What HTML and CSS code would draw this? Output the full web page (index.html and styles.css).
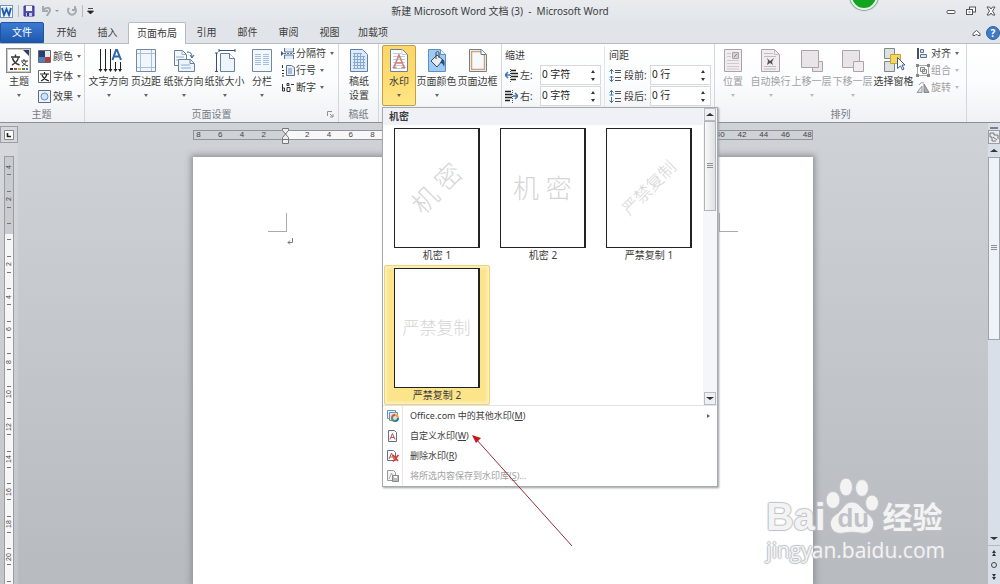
FILE: index.html
```html
<!DOCTYPE html>
<html lang="zh-CN">
<head>
    <meta charset="utf-8">
    <title>新建 Microsoft Word 文档 (3) - Microsoft Word</title>
    <link rel="stylesheet" href="styles.css">
</head>
<body>
    <header class="titlebar">
        <div class="quick">
            <svg width="14" height="16" viewBox="0 0 14 16"><rect x="0.5" y="2.5" width="12" height="12" fill="#fff" stroke="#6f94bf"/><rect x="2" y="4" width="9" height="9" fill="#dceaf8"/><path d="M2 5l2 7 2.5-6 2.5 6 2-7" fill="none" stroke="#1c5aa8" stroke-width="1.8"/></svg>
            <span class="bar"></span>
            <button class="tool" aria-label="保存"><svg width="12" height="12" viewBox="0 0 12 12"><path d="M1 1h10v10H1z" fill="#5450b4" stroke="#37348c"/><path d="M3 1h6v5H3z" fill="#f2f4fc"/><path d="M3 8h6v3H3z" fill="#c5c9ea"/><path d="M4 8h2v3H4z" fill="#37348c"/></svg></button>
            <button class="tool" aria-label="撤消"><svg width="19" height="12" viewBox="0 0 19 12"><path d="M2 1v5h5M2 6c2-4 7-4 7-1 0 3-3 4-3 6" fill="none" stroke="#a5a9b0" stroke-width="2"/><path d="M14 5h4l-2 2z" fill="#999"/></svg></button>
            <button class="tool" aria-label="恢复"><svg width="12" height="12" viewBox="0 0 12 12"><path d="M3 3a4 4 0 1 0 6 0M9 1v4H6" fill="none" stroke="#a5a9b0" stroke-width="2"/></svg></button>
            <span class="bar"></span>
            <button class="tool" aria-label="自定义"><svg width="7" height="8" viewBox="0 0 7 8"><path d="M1 1.5h5M0.5 4h6l-3 3z" fill="#222" stroke="#222" stroke-width="0.8"/></svg></button>
        </div>
        <div class="caption">新建 Microsoft Word 文档 (3)&nbsp; -&nbsp; Microsoft Word</div>
        <div class="winbuttons">
            <button class="tool" aria-label="最小化"><svg width="10" height="10" viewBox="0 0 10 10"><rect x="1" y="4.5" width="8" height="3" rx="1" fill="#fff" stroke="#555"/></svg></button>
            <button class="tool" aria-label="还原"><svg width="10" height="10" viewBox="0 0 10 10"><rect x="3.5" y="1" width="6" height="5" fill="#fff" stroke="#555"/><rect x="0.5" y="3.5" width="6" height="5" fill="#fff" stroke="#555"/><path d="M2.5 6h2" stroke="#555"/></svg></button>
            <button class="tool" aria-label="关闭"><svg width="10" height="10" viewBox="0 0 10 10"><path d="M1 1h2.5L5 3l1.5-2H9L6.5 5 9 9H6.5L5 7 3.5 9H1l2.5-4z" fill="#fff" stroke="#555"/></svg></button>
        </div>
        <span class="ball"></span>
    </header>

    <nav class="tabs">
        <button class="tab file">文件</button>
        <button class="tab">开始</button>
        <button class="tab">插入</button>
        <button class="tab active">页面布局</button>
        <button class="tab">引用</button>
        <button class="tab">邮件</button>
        <button class="tab">审阅</button>
        <button class="tab">视图</button>
        <button class="tab">加载项</button>
        <div class="help">
            <button class="tool" aria-label="折叠"><svg width="9" height="8" viewBox="0 0 9 8"><path d="M1 4.5l3.5-3 3.5 3v2H6L4.5 5 3 6.500H1z" fill="#fff" stroke="#555"/></svg></button>
            <button class="tool round" aria-label="帮助">?</button>
        </div>
    </nav>

    <div class="ribbon">
        <section class="group">
            <div class="tools">
                <button class="big">
                    <svg width="26" height="26" viewBox="0 0 26 26"><rect x="0.5" y="0.5" width="24" height="24" fill="#fff" stroke="#888"/><rect x="1.5" y="1.5" width="22" height="22" fill="none" stroke="#ccc"/><path d="M17 2h6v6z" fill="#27406f"/><path d="M5 9h9M9.5 6.5V9M6 17c4-2 6-5 6.5-8M6.5 10c1 4 4 6 7 7" stroke="#333" stroke-width="1.4" fill="none"/><path d="M15 13h7M18 11v2M16 18c2-1 4-3 4-5M16 14c1 2 3 3 6 4" stroke="#333" fill="none"/><path d="M4 21h3" stroke="#333" stroke-width="2"/><path d="M8 21h3" stroke="#b84b3c" stroke-width="2"/><path d="M12 21h3" stroke="#d9a23c" stroke-width="2"/><path d="M16 21h3" stroke="#57864a" stroke-width="2"/><path d="M20 21h2" stroke="#4a78b5" stroke-width="2"/></svg>
                    <span>主题</span><i class="caret"></i>
                </button>
                <div class="stack wide">
                    <button class="small"><svg width="14" height="13" viewBox="0 0 14 13"><path d="M1 1h6v6H1z" fill="#243f70"/><path d="M7 1h6v6H7z" fill="#e3e8ef"/><path d="M1 7h6v5H1z" fill="#4c82bc"/><path d="M7 7h6v5H7z" fill="#b83b37"/><path d="M.5.5h12v12H.5z" fill="none" stroke="#667"/></svg><span>颜色</span><i class="caret"></i></button>
                    <button class="small"><svg width="14" height="13" viewBox="0 0 14 13"><path d="M.5.5h12v12H.5z" fill="#fff" stroke="#667"/><path d="M2 4h9M6.5 2v2M3 11c4-2 5-4 6-7M4 5c1 3 4 5 7 6" stroke="#222" fill="none" stroke-width="1.2"/></svg><span>字体</span><i class="caret"></i></button>
                    <button class="small"><svg width="14" height="13" viewBox="0 0 14 13"><path d="M.5.5h12v12H.5z" fill="#eef3fa" stroke="#667"/><circle cx="6.5" cy="6.5" r="3.5" fill="#cfe2f8" stroke="#5b8ecb"/></svg><span>效果</span><i class="caret"></i></button>
                </div>
            </div>
            <div class="name">主题</div>
        </section>

        <section class="group setup">
            <div class="tools">
                <button class="big long">
                    <svg width="26" height="26" viewBox="0 0 26 26"><path d="M4.5 1v20M9.5 1v20M14.5 1v20M19.5 14v8M24.5 14v8" stroke="#222"/><path d="M2.5 21h4l-2 3zM7.5 21h4l-2 3zM12.5 21h4l-2 3zM17.5 21h4l-2 3zM22 21h4l-2 3z" fill="#222"/><path d="M16.5 12l3.5-10h1l4 10M18 8.5h5" fill="none" stroke="#2f67a8" stroke-width="2"/></svg>
                    <span>文字方向</span><i class="caret"></i>
                </button>
                <button class="big">
                    <svg width="22" height="26" viewBox="0 0 22 26"><path d="M1.5 1.5h19v22h-19z" fill="#f1f6fc" stroke="#7488a2"/><path d="M5.5 2v21M16.5 2v21M2 5.5h18M2 19.5h18" stroke="#a5c0dc"/></svg>
                    <span>页边距</span><i class="caret"></i>
                </button>
                <button class="big long">
                    <svg width="24" height="26" viewBox="0 0 24 26"><path d="M2.5 2.5h8l4 4v11h-12z" fill="#f5f9fe" stroke="#6b7f99"/><path d="M10 2.5v4h4M4 9h8M4 12h8" fill="none" stroke="#8daed0"/><path d="M6.5 11.5h12l4 4v8h-16z" fill="#edf3fb" stroke="#6b7f99"/><path d="M18 11.5v4h4" fill="none" stroke="#6b7f99"/><path d="M9 17h9M9 20h10" stroke="#8daed0"/><path d="M15 4c4 0 5 2 5 5M18 7l2 3 2-3" fill="none" stroke="#2f5f9c"/></svg>
                    <span>纸张方向</span><i class="caret"></i>
                </button>
                <button class="big long">
                    <svg width="24" height="26" viewBox="0 0 24 26"><path d="M7.5 5.5h9l5 5v13h-14z" fill="#edf4fc" stroke="#6b7f99"/><path d="M16.5 5.5v5h5" fill="#fff" stroke="#6b7f99"/><path d="M6 2.5h16M6 1v3M22 1v3M3.5 5v18M2 5h3M2 23.5h3" stroke="#34517a" fill="none"/></svg>
                    <span>纸张大小</span><i class="caret"></i>
                </button>
                <button class="big">
                    <svg width="22" height="26" viewBox="0 0 22 26"><path d="M1.5 1.5h19v22h-19z" fill="#f4f8fd" stroke="#7488a2"/><path d="M4 6.5h6M4 8.5h6M4 10.5h6M4 12.5h6M4 14.5h6M4 16.5h6M12 6.5h6M12 8.5h6M12 10.5h6M12 12.5h6M12 14.5h6M12 16.5h6" stroke="#a5bedb"/></svg>
                    <span>分栏</span><i class="caret"></i>
                </button>
                <div class="stack">
                    <button class="small"><svg width="14" height="13" viewBox="0 0 14 13"><path d="M3.5 1v4h9V1M3.5 12V8h9v4" fill="#dce8f6" stroke="#5c7390"/><path d="M3 6.5h11" stroke="#5c7390" stroke-dasharray="2 1"/><path d="M0 4l3 2.5L0 9z" fill="#2f5f9c"/></svg><span>分隔符</span><i class="caret"></i></button>
                    <button class="small"><svg width="14" height="13" viewBox="0 0 14 13"><path d="M5.5 1.5h5l3 2v8h-8z" fill="#e6eff9" stroke="#5c7390"/><path d="M7 5h4M7 7h4M7 9h4" stroke="#6c88aa"/><path d="M1.5 1v3M1 6.5h2M1 9.5h2M1 12h2" stroke="#333"/></svg><span>行号</span><i class="caret"></i></button>
                    <button class="small"><svg width="14" height="13" viewBox="0 0 14 13"><path d="M1.5 3v7h2V7h-2M6 2.5h2v2H6zM6 6.5h3v4H6zM10 3.5h3" fill="none" stroke="#333"/></svg><span>断字</span><i class="caret"></i></button>
                </div>
            </div>
            <div class="name">页面设置<svg class="launch" width="7" height="7" viewBox="0 0 7 7"><path d="M.5 5V.5H5M3 3l3 3M6 3v3H3" fill="none" stroke="#8a919c"/></svg></div>
        </section>

        <section class="group paper">
            <div class="tools">
                <button class="big">
                    <svg width="20" height="26" viewBox="0 0 20 26"><path d="M1.5 1.5h12l5 5v17h-17z" fill="#dbe9f8" stroke="#5f7fa8"/><path d="M4 5.5h9M4 8.5h12M4 11.5h12M4 14.5h12M4 17.5h12M4 20.5h12M5.5 5v16M8.5 5v16M11.5 5v16M14.5 8v13" stroke="#88a9cf"/></svg>
                    <span>稿纸</span><span>设置</span>
                </button>
            </div>
            <div class="name">稿纸</div>
        </section>

        <section class="group back">
            <div class="tools">
                <div class="drop">
                    <button class="big pressed">
                        <svg width="20" height="26" viewBox="0 0 20 26"><path d="M1.5 1.5h12l5 5v17h-17z" fill="#fff" stroke="#6b7f99"/><path d="M13 1.5v5h5M4 5.5h8M4 8.5h12M4 11.5h12M4 14.5h12M4 17.5h12M4 20.5h12" fill="none" stroke="#c5cbd4"/><path d="M5 19l5-12 5 12M7 15h6M3.5 19.5h4M12.5 19.5h4" fill="none" stroke="#cf8080" stroke-width="1.6"/></svg>
                        <span>水印</span><i class="caret"></i>
                    </button>
                    <div class="menu">
                        <div class="upper">
                            <div class="gallery">
                                <div class="heading">机密</div>
                                <div class="grid">
                                    <button class="cell"><span class="sheet"><b class="mark tilt">机 密</b></span><span>机密 1</span></button>
                                    <button class="cell"><span class="sheet"><b class="mark">机 密</b></span><span>机密 2</span></button>
                                    <button class="cell"><span class="sheet"><b class="mark fine tilt">严禁复制</b></span><span>严禁复制 1</span></button>
                                    <button class="cell chosen"><span class="sheet"><b class="mark fine">严禁复制</b></span><span>严禁复制 2</span></button>
                                </div>
                            </div>
                            <div class="scroll">
                                <button class="arrow" aria-label="向上"><i class="up"></i></button>
                                <div class="thumb"><i class="grip"></i></div>
                                <button class="arrow last" aria-label="向下"><i class="down"></i></button>
                            </div>
                        </div>
                        <button class="item">
                            <span class="icon"><svg width="14" height="14" viewBox="0 0 14 14"><path d="M1.5 1.5h8v8h-8z" fill="#eaf2fb" stroke="#6b8fbd"/><path d="M3.5 3.5h8v8h-8z" fill="#d5e5f6" stroke="#6b8fbd"/><path d="M6 9a3 3 0 0 1 3-3" stroke="#d45b35" fill="none" stroke-width="2"/><path d="M9 6a3 3 0 0 1 3 3" stroke="#e3ae31" fill="none" stroke-width="2"/><path d="M12 9a3 3 0 0 1-3 3" stroke="#2d6fb5" fill="none" stroke-width="2"/><path d="M9 12a3 3 0 0 1-3-3" stroke="#4c9a4c" fill="none" stroke-width="2"/></svg></span>
                            <span class="text">Office.com 中的其他水印(<u>M</u>)</span><i class="more"></i>
                        </button>
                        <button class="item">
                            <span class="icon"><svg width="14" height="14" viewBox="0 0 14 14"><path d="M2.5 1.5h6l2 2v9h-8z" fill="#fff" stroke="#63708c"/><path d="M4 10.5l2.5-6 2.5 6M5 8.5h3" fill="none" stroke="#c05050"/></svg></span>
                            <span class="text">自定义水印(<u>W</u>)</span>
                        </button>
                        <button class="item">
                            <span class="icon"><svg width="14" height="14" viewBox="0 0 14 14"><path d="M1.5 1.5h6l2 2v8h-8z" fill="#fff" stroke="#63708c"/><path d="M3 10l2.5-6L8 10M4 8h3" fill="none" stroke="#c05050"/><path d="M7 6l5 6M12.5 6L7 12.5" stroke="#d5402b" stroke-width="1.8"/></svg></span>
                            <span class="text">删除水印(<u>R</u>)</span>
                        </button>
                        <button class="item" disabled>
                            <span class="icon"><svg width="14" height="14" viewBox="0 0 14 14"><path d="M1.5 1.5h6l2 2v8h-8z" fill="#f5f5f5" stroke="#999"/><path d="M3 10l2.5-6L8 10" fill="none" stroke="#aaa"/><path d="M6.5 6.5h6v6h-6z" fill="#bbb" stroke="#888"/><path d="M8 7h3v2H8z" fill="#fff"/></svg></span>
                            <span class="text">将所选内容保存到水印库(<u>S</u>)...</span>
                        </button>
                    </div>
                </div>
                <button class="big long">
                    <svg width="20" height="26" viewBox="0 0 20 26"><path d="M1.5 1.5h12l5 5v17h-17z" fill="#9dcbf2" stroke="#5f8fc0"/><path d="M13.5 1.5v5h5" fill="#e5f2fd" stroke="#5f8fc0"/><path d="M4 13l6-6 6 5-6 7z" fill="#e9edf1" stroke="#404a56"/><path d="M9 11V5c0-2 3-2 3 0v5" fill="none" stroke="#404a56"/><path d="M15 11c3 1 3 4 2 8-1-4-3-4-4-4z" fill="#244f85"/></svg>
                    <span>页面颜色</span><i class="caret"></i>
                </button>
                <button class="big long">
                    <svg width="20" height="26" viewBox="0 0 20 26"><path d="M1.5 1.5h12l5 5v17h-17z" fill="#fff" stroke="#6b7f99"/><path d="M3.5 3.5h9l4 4v14h-13z" fill="#f5f8fc" stroke="#d3a171" stroke-width="1.5"/><path d="M13 1.5v5h5" fill="#fff" stroke="#6b7f99"/></svg>
                    <span>页面边框</span>
                </button>
            </div>
        </section>

        <section class="group para">
            <div class="fields">
                <div class="title">缩进</div>
                <div class="field">
                    <svg width="13" height="13" viewBox="0 0 13 13"><path d="M6 1.5h5M6 4.5h7M6 7.5h7M6 10.5h5" stroke="#222" stroke-width="1.5"/><path d="M0 6h5M3 3l-3 3 3 3" stroke="#3976b9" fill="none" stroke-width="1.5"/><path d="M5.5 0v13" stroke="#555" stroke-dasharray="1 1"/></svg>
                    <label for="left">左:</label>
                    <div class="spin"><input id="left" type="text" value="0 字符"><div class="steps"><button aria-label="增加"><i class="up"></i></button><button aria-label="减少"><i class="down"></i></button></div></div>
                </div>
                <div class="field">
                    <svg width="13" height="13" viewBox="0 0 13 13"><path d="M0 1.5h6M0 4.5h7M0 7.5h7M0 10.5h5" stroke="#222" stroke-width="1.5"/><path d="M13 6H8M10 3l3 3-3 3" stroke="#3976b9" fill="none" stroke-width="1.5"/><path d="M7.5 0v13" stroke="#555" stroke-dasharray="1 1"/></svg>
                    <label for="right">右:</label>
                    <div class="spin"><input id="right" type="text" value="0 字符"><div class="steps"><button aria-label="增加"><i class="up"></i></button><button aria-label="减少"><i class="down"></i></button></div></div>
                </div>
            </div>
            <div class="fields">
                <div class="title">间距</div>
                <div class="field">
                    <svg width="13" height="13" viewBox="0 0 13 13"><path d="M6 1.5h6M6 3.5h6M6 8.5h6M6 11.5h6" stroke="#555"/><path d="M2.5 0v5M2.5 7v6M0.5 2.500l2-2 2 2M0.5 10.5l2 2 2-2M0.5 8h4" stroke="#3976b9" fill="none"/></svg>
                    <label for="before">段前:</label>
                    <div class="spin"><input id="before" type="text" value="0 行"><div class="steps"><button aria-label="增加"><i class="up"></i></button><button aria-label="减少"><i class="down"></i></button></div></div>
                </div>
                <div class="field">
                    <svg width="13" height="13" viewBox="0 0 13 13"><path d="M6 1.5h6M6 3.5h6M6 8.5h6M6 11.5h6" stroke="#555"/><path d="M2.5 0v5M2.5 7v6M0.5 2.500l2-2 2 2M0.5 10.5l2 2 2-2M0.5 5h4" stroke="#3976b9" fill="none"/></svg>
                    <label for="after">段后:</label>
                    <div class="spin"><input id="after" type="text" value="0 行"><div class="steps"><button aria-label="增加"><i class="up"></i></button><button aria-label="减少"><i class="down"></i></button></div></div>
                </div>
            </div>
        </section>

        <section class="group arrange">
            <div class="tools">
                <button class="big" disabled>
                    <svg width="20" height="26" viewBox="0 0 20 26"><path d="M1.5 1.5h17v22h-17z" fill="#f0ecef" stroke="#aaa3a8"/><path d="M9.5 4.5h6v6h-6z" fill="#d5ced3" stroke="#aaa3a8"/><path d="M11 9l3-3" stroke="#888"/><path d="M4 5.5h4M4 8.5h4M4 12.5h12M4 15.5h12M4 18.5h12M4 21h12" stroke="#cfc8cd"/></svg>
                    <span>位置</span><i class="caret"></i>
                </button>
                <button class="big long" disabled>
                    <svg width="20" height="26" viewBox="0 0 20 26"><path d="M.5 1.5h13l5 5v17H.5z" fill="#f0ecef" stroke="#aaa3a8"/><path d="M13.5 1.5v5h5M3 5.5h9M3 8.5h12M3 18.5h12M3 21h12" fill="none" stroke="#c2bbc0"/><path d="M6 10l3 3 4-3-2 4 1 3-3-2-3 2 1-4z" fill="#555"/></svg>
                    <span>自动换行</span><i class="caret"></i>
                </button>
                <button class="big long" disabled>
                    <svg width="24" height="26" viewBox="0 0 24 26"><path d="M12.5 13.5h10v10h-10z" fill="#e9e4e8" stroke="#aaa3a8"/><path d="M1.5 2.5h17v17h-17z" fill="#e9e4e8" stroke="#aaa3a8"/></svg>
                    <span>上移一层</span><i class="caret"></i>
                </button>
                <button class="big long" disabled>
                    <svg width="24" height="26" viewBox="0 0 24 26"><path d="M1.5 2.5h17v17h-17z" fill="#e9e4e8" stroke="#aaa3a8"/><path d="M12.5 13.5h10v10h-10z" fill="#efebee" stroke="#aaa3a8"/></svg>
                    <span>下移一层</span><i class="caret"></i>
                </button>
                <button class="big long">
                    <svg width="22" height="26" viewBox="0 0 22 26"><path d="M1.5.5h10v10h-10zM1.5 13.5h10v10h-10z" fill="#dde2df" stroke="#7b8791"/><path d="M7.5 6.5h10v9h-10z" fill="#f5d660" stroke="#c9a22c"/><path d="M14.5 9.5v11l3-2.5 2 4 1.5-1-2-4h3z" fill="#fff" stroke="#3b5f92"/></svg>
                    <span>选择窗格</span>
                </button>
                <div class="stack">
                    <button class="small"><svg width="14" height="13" viewBox="0 0 14 13"><path d="M2 1v11" stroke="#222" stroke-width="1.6"/><path d="M4.5 2.5h3v3h-3zM4.5 7.5h6v3h-6z" fill="#d7e3f1" stroke="#5c7390"/></svg><span>对齐</span><i class="caret"></i></button>
                    <button class="small" disabled><svg width="14" height="13" viewBox="0 0 14 13"><path d="M1.5 1.5h11v10h-11z" fill="none" stroke="#aaa"/><path d="M0 0h3v3H0zM11 0h3v3h-3zM0 10h3v3H0zM11 10h3v3h-3z" fill="#888"/><path d="M4.5 3.5h4v4h-4zM6.5 5.5h4v4h-4z" fill="#eee" stroke="#888"/></svg><span>组合</span><i class="caret"></i></button>
                    <button class="small" disabled><svg width="14" height="13" viewBox="0 0 14 13"><path d="M1 11.5h5V5z" fill="#ddd" stroke="#999"/><path d="M8 11.5h5L8 3z" fill="#aaa" stroke="#888"/><path d="M3 4c1-2 3-3 5-2" fill="none" stroke="#999"/></svg><span>旋转</span><i class="caret"></i></button>
                </div>
            </div>
            <div class="name">排列</div>
        </section>
    </div>

    <main class="work">
        <div class="side">
            <button class="tabstop" aria-label="制表符"><svg width="10" height="10" viewBox="0 0 10 10"><path d="M.5.5h9v9h-9z" fill="#fff" stroke="#888"/><path d="M3.5 3v3.5H7" fill="none" stroke="#222" stroke-width="1.6"/></svg></button>
            <div class="vruler">
                <span>4</span><span>2</span><span></span><span>2</span><span>4</span><span>6</span><span>8</span><span>10</span><span>12</span><span>14</span><span>16</span><span>18</span><span>20</span><span></span>
            </div>
        </div>
        <div class="doc">
            <div class="hruler">
                <span>8</span><span>6</span><span>4</span><span>2</span><span class="indent"><svg width="9" height="17" viewBox="0 0 9 17"><path d="M1.5.5h6v2l-3 3.5 3 3.5v6h-6v-6l3-3.5-3-3.5zM1.5 11.5h6" fill="#eee" stroke="#777"/></svg></span><span class="stop">2</span><span class="stop">4</span><span class="stop">6</span><span class="stop">8</span><span class="stop">10</span><span class="stop">12</span><span class="stop">14</span><span class="stop">16</span><span class="stop">18</span><span class="stop">20</span><span class="stop">22</span><span class="stop">24</span><span class="stop">26</span><span class="stop">28</span><span class="stop">30</span><span class="stop">32</span><span class="stop">34</span><span class="stop">36</span><span class="stop">38</span><span>40</span><span>42</span><span>44</span><span>46</span><span>48</span>
            </div>
            <div class="page">
                <div class="corners"><span class="corner"></span><span class="corner flip"></span></div>
                <svg class="return" width="7" height="7" viewBox="0 0 7 7"><path d="M5.5 0v4.5H1M3 2.5l-2 2 2 2" fill="none" stroke="#777"/></svg>
            </div>
        </div>
        <div class="vscroll">
            <i class="split"></i>
            <button class="toggle" aria-label="标尺"><svg width="10" height="10" viewBox="0 0 10 10"><path d="M1 1h4v2h4v4M1 1v4h2v4h4M4 5l4 3" fill="none" stroke="#777"/></svg></button>
            <button class="end" aria-label="向上"><i class="up"></i></button>
            <div class="slider"><i class="grip"></i></div>
            <button class="end bottom" aria-label="向下"><i class="down"></i></button>
            <div class="browse">
                <button aria-label="前一页"><i class="up"></i><i class="up"></i></button>
                <button aria-label="浏览对象"><i class="dot"></i></button>
                <button aria-label="下一页"><i class="down"></i><i class="down"></i></button>
            </div>
        </div>
    </main>

    <svg class="pointer" width="102" height="112" viewBox="0 0 102 112"><path d="M4 4l96 107" stroke="#8f3038"/><path d="M0 0l9 3-5 5z" fill="#c8161d"/></svg>

    <div class="brand">
        <div class="logo">
            <span class="bai">Bai</span>
            <span class="paw">
                <svg width="54" height="60" viewBox="0 0 54 60"><g fill="#f3f3f4" stroke="#c3c5c9"><ellipse cx="8" cy="25" rx="7" ry="8.5"/><ellipse cx="21" cy="12" rx="6.5" ry="9"/><ellipse cx="37" cy="13" rx="6.5" ry="8.5"/><ellipse cx="47" cy="28" rx="6.5" ry="8"/><path d="M27 27c-7 0-9 7-14 11-6 4-9 8-7 14 2 6 8 7 13 6 5-1 11-1 16 0 5 1 11 0 13-6 2-6-1-10-6-14-6-5-8-11-15-11z"/></g></svg>
                <span class="du">du</span>
            </span>
            <span class="jy">经验</span>
        </div>
        <div class="url">jingyan.baidu.com</div>
    </div>
</body>
</html>
```

FILE: styles.css
```css
* {
    box-sizing: border-box;
}
body {
    margin: 0;
    height: 100vh;
    display: flex;
    flex-direction: column;
    overflow: hidden;
    position: relative;
    font-family: "Noto Sans", "Noto Sans CJK SC", sans-serif;
    font-size: 10px;
    line-height: 14px;
    color: #3c3c3c;
    background: #e3e7eb;
}
button {
    font: inherit;
    color: inherit;
    background: none;
    border: none;
    padding: 0;
}
button:disabled {
    color: #a0a0a0;
}
svg {
    display: block;
    flex: none;
}
i {
    display: block;
}

/* title bar */
.titlebar {
    display: grid;
    grid-template-columns: 1fr auto 1fr;
    align-items: center;
    height: 22px;
    flex: none;
    background: linear-gradient(#e9ebef, #e2e6ea);
    position: relative;
}
.quick {
    display: flex;
    align-items: center;
    height: 18px;
    gap: 6px;
}
.bar {
    width: 1px;
    height: 12px;
    background: #b5b9c0;
    margin: 0 -2px;
}
.tool {
    display: flex;
    align-items: center;
    justify-content: center;
}
.winbuttons {
    display: flex;
    justify-content: flex-end;
    gap: 10px;
    padding-right: 4px;
}
.ball {
    position: absolute;
    left: 85%;
    top: -18px;
    width: 28px;
    height: 28px;
    border-radius: 50%;
    border: 2px solid #e9f5e9;
    box-shadow: 0 0 1px 1px #7fa182;
    background: #12a321;
}

/* tabs */
.tabs {
    display: flex;
    height: 22px;
    flex: none;
    background: #e1e5e9;
    border-bottom: 1px solid #b5bcc3;
}
.tab {
    min-width: 41px;
    padding: 0 8px 2px;
}
.tab.file {
    width: 44px;
    margin-right: 2px;
    color: #fff;
    background: linear-gradient(#3a7bd0, #1f58ae);
    border: 1px solid #1f54a3;
    border-radius: 2px 2px 0 0;
}
.tab.active {
    margin-bottom: -1px;
    background: #fff;
    border: 1px solid #b5bcc3;
    border-bottom: none;
    border-radius: 2px 2px 0 0;
}
.help {
    display: flex;
    align-items: center;
    gap: 5px;
    margin-left: auto;
}
.round {
    width: 14px;
    height: 14px;
    border-radius: 50%;
    background: #3f7ac4;
    border: 1px solid #2f62a3;
    color: #fff;
    font-weight: bold;
}

/* ribbon */
.ribbon {
    display: flex;
    flex: none;
    height: 79px;
    background: linear-gradient(#fff, #fbfcfd 50%, #eff1f4);
    border-bottom: 1px solid #8b9097;
    white-space: nowrap;
}
.group {
    display: flex;
    flex-direction: column;
    justify-content: space-between;
    flex: none;
    border-right: 1px solid #d3d7dc;
    padding: 2px 3px 1px;
}
.group:first-child {
    padding-left: 2px;
}
.tools {
    display: flex;
}
.name {
    display: flex;
    justify-content: center;
    position: relative;
    color: #767b84;
}
.launch {
    position: absolute;
    right: 1px;
    top: 4px;
}
.setup {
    width: 254px;
}
.paper {
    width: 40px;
}
.back {
    width: 123px;
}
.para {
    width: 213px;
    flex-direction: row;
}
.arrange {
    width: 252px;
    padding-left: 1px;
    padding-right: 1px;
}
.big {
    display: flex;
    flex-direction: column;
    align-items: center;
    min-width: 34px;
    height: 61px;
    padding-top: 3px;
    margin-top: -1px;
}
.big.long {
    width: 41px;
}
.caret {
    border: 2px solid transparent;
    border-top: 3px solid #666;
    border-bottom: none;
    margin-top: 6px;
}
button:disabled .caret {
    border-top-color: #bbb;
}
.pressed {
    padding-top: 2px;
    background: linear-gradient(#fbd668, #fcdc71 50%, #ffe685);
    border: 1px solid #c2a04a;
    border-radius: 2px;
}
.stack {
    display: flex;
    flex-direction: column;
    gap: 3px;
    padding-left: 2px;
}
.wide {
    gap: 6px;
    padding-top: 3px;
}
.small {
    display: flex;
    align-items: center;
    gap: 1px;
    height: 14px;
}
.small .caret {
    margin: 0 0 0 3px;
}
.fields {
    display: flex;
    flex-direction: column;
    flex: 1;
    gap: 1px;
}
.fields:first-child {
    flex: none;
    width: 96px;
    margin-right: 3px;
}
.fields + .fields {
    border-left: 1px solid #e3e5e8;
    padding-left: 4px;
}
.title {
    height: 18px;
    line-height: 18px;
}
.field {
    display: flex;
    align-items: center;
    gap: 2px;
    height: 20px;
}
.spin {
    display: flex;
    width: 61px;
    height: 20px;
    margin-left: auto;
    background: #fff;
    border: 1px solid #d5d8dc;
}
.spin input {
    width: 100%;
    min-width: 0;
    border: none;
    padding: 0 0 2px 1px;
    font: inherit;
    color: #222;
    background: none;
}
.steps {
    display: flex;
    flex-direction: column;
    justify-content: space-around;
    padding: 1px 5px;
}
.up {
    border: 2px solid transparent;
    border-bottom: 3px solid #333;
    border-top: none;
}
.down {
    border: 2px solid transparent;
    border-top: 3px solid #333;
    border-bottom: none;
}

/* watermark menu */
.drop {
    position: relative;
}
.menu {
    position: absolute;
    z-index: 5;
    left: 0;
    top: 61px;
    width: 336px;
    background: #fff;
    border: 1px solid #a7abb0;
    box-shadow: 1px 1px 2px #9a9da2;
}
.upper {
    display: flex;
    border-bottom: 1px solid #dfe2e6;
}
.gallery {
    flex: 1;
}
.heading {
    height: 17px;
    line-height: 17px;
    padding-left: 6px;
    font-weight: bold;
    background: #eff1f6;
}
.grid {
    display: grid;
    grid-template-columns: repeat(3, 106px);
    padding-left: 1px;
}
.cell {
    display: flex;
    flex-direction: column;
    align-items: center;
    height: 140px;
    padding-top: 2px;
    border: 1px solid transparent;
}
.chosen {
    background: #fce48b;
    border-color: #ecd27a;
    border-radius: 2px;
    box-shadow: inset 0 0 3px 2px #fdf0bd;
}
.sheet {
    display: flex;
    align-items: center;
    justify-content: center;
    width: 86px;
    height: 120px;
    background: #fff;
    border: 1px solid #222;
    border-right-width: 2px;
}
.mark {
    font-size: 26px;
    font-weight: 300;
    color: #d5d5d5;
    white-space: nowrap;
}
.fine {
    font-size: 17px;
}
.tilt {
    transform: rotate(-45deg);
}
.scroll {
    width: 14px;
    background: #f5f6f7;
    display: flex;
    flex-direction: column;
    align-items: center;
}
.arrow {
    width: 12px;
    height: 13px;
    display: flex;
    align-items: center;
    justify-content: center;
    border: 1px solid #b8bcc2;
    background: #eef1f4;
}
.arrow .up,
.arrow .down,
.end .up,
.end .down {
    border-left-width: 4px;
    border-right-width: 4px;
}
.last {
    margin-top: auto;
}
.thumb {
    width: 12px;
    height: 90px;
    display: flex;
    align-items: center;
    justify-content: center;
    border: 1px solid #b0b4b9;
    background: linear-gradient(90deg, #f8f8f9, #dfe1e3);
}
.grip {
    width: 6px;
    height: 6px;
    background: repeating-linear-gradient(#8c9198 0 1px, #eee 1px 2px);
}
.item {
    display: flex;
    align-items: center;
    width: 100%;
    height: 20px;
    font-size: 9px;
    text-align: left;
}
.icon {
    width: 20px;
    height: 20px;
    padding: 3px;
    border-right: 1px solid #e5e7ea;
}
.text {
    padding-left: 7px;
    flex: 1;
}
.more {
    border: 2px solid transparent;
    border-left: 3px solid #666;
    border-right: none;
    margin-right: 7px;
}

/* workspace */
.work {
    display: flex;
    flex: 1;
    min-height: 0;
    background: linear-gradient(#cfd2d7, #b7babf);
}
.side {
    width: 18px;
    overflow: hidden;
    padding-top: 3px;
    background: rgba(255, 255, 255, 0.15);
}
.tabstop {
    display: flex;
    align-items: center;
    justify-content: center;
    width: 18px;
    height: 17px;
    border: 1px solid #9a9ea5;
}
.vruler {
    width: 10px;
    margin: 13px 0 0 4px;
    border: 1px solid #999da3;
    background: linear-gradient(#c8cbd0 77px, #f6f6f6 77px);
    font-family: "Liberation Sans", sans-serif;
    font-size: 7px;
    line-height: 8px;
    color: #444;
}
.vruler span {
    display: flex;
    align-items: center;
    justify-content: center;
    writing-mode: vertical-rl;
    transform: rotate(180deg);
    width: 8px;
    height: 32px;
    background: linear-gradient(#777, #777) 2px 8px / 4px 1px no-repeat, linear-gradient(#777, #777) 2px 24px / 4px 1px no-repeat;
}
.vruler span:nth-child(even) {
    height: 33px;
}
.vruler span:first-child {
    margin-top: -6px;
    background: linear-gradient(#777, #777) 2px 8px / 4px 1px no-repeat;
}
.doc {
    flex: 1;
    display: flex;
    flex-direction: column;
    align-items: center;
}
.hruler {
    display: flex;
    justify-content: space-between;
    width: 64%;
    height: 10px;
    margin-top: 7px;
    padding: 0 1px;
    flex: none;
    border: 1px solid #8f949b;
    background: linear-gradient(90deg, transparent 15%, #f8f8f8 15% 85%, transparent 85%);
    font-family: "Liberation Sans", sans-serif;
    font-size: 8px;
    line-height: 8px;
    color: #444;
}
.hruler span {
    display: flex;
    flex-direction: column;
    align-items: center;
    width: 8px;
}
.stop::after {
    content: "";
    width: 1px;
    height: 2px;
    margin-top: 2px;
    background: #666;
}
.indent {
    margin-top: -3px;
}
.page {
    width: 64%;
    flex: 1;
    margin-top: 17px;
    padding: 56px 75px 0;
    background: #fff;
    box-shadow: 0 0 6px 2px #8e9299;
}
.corners {
    display: flex;
    justify-content: space-between;
}
.corner {
    width: 19px;
    height: 19px;
    border-right: 1px solid #aaa;
    border-bottom: 1px solid #aaa;
}
.flip {
    border-right: none;
    border-left: 1px solid #aaa;
}
.return {
    margin: 6px 0 0 19px;
}
.vscroll {
    display: flex;
    flex-direction: column;
    align-items: center;
    width: 12px;
    padding-top: 4px;
    background: #d9dfe8;
}
.split {
    width: 8px;
    height: 2px;
    background: #7a818c;
}
.toggle {
    width: 12px;
    height: 14px;
    margin-top: 1px;
    border: 1px solid #9a9ea5;
    background: #e9ebee;
}
.end {
    height: 13px;
    display: flex;
    align-items: center;
}
.slider {
    display: flex;
    align-items: center;
    justify-content: center;
    width: 12px;
    height: 40%;
    border: 1px solid #9fa5ae;
    background: #eff2f7;
}
.bottom {
    margin-top: auto;
}
.browse {
    display: flex;
    flex-direction: column;
    align-items: center;
    gap: 6px;
    width: 100%;
    padding: 4px 0;
    border-top: 1px solid #b4bac3;
}
.dot {
    width: 6px;
    height: 6px;
    border: 1px solid #444;
    border-radius: 50%;
}

/* overlays */
.pointer {
    position: absolute;
    z-index: 6;
    left: 472px;
    top: 435px;
}
.brand {
    position: absolute;
    right: 55px;
    bottom: 22px;
    color: #f3f3f4;
    text-shadow: 1px 0 1px #bfc1c5, -1px 0 1px #bfc1c5, 0 1px 1px #bfc1c5, 0 -1px 1px #bfc1c5;
}
.logo {
    display: flex;
    align-items: flex-end;
    font-family: "Liberation Sans", "Noto Sans CJK SC", sans-serif;
    font-weight: bold;
    padding-bottom: 3px;
}
.bai {
    font-size: 38px;
    line-height: 36px;
}
.paw {
    position: relative;
}
.du {
    position: absolute;
    left: 12px;
    bottom: 5px;
    font-size: 26px;
    line-height: 24px;
    color: #c0c2c6;
    text-shadow: none;
}
.jy {
    padding-left: 3px;
    font-size: 30px;
    line-height: 34px;
}
.url {
    font-family: "Open Sans", sans-serif;
    font-size: 21px;
    line-height: 24px;
}
```
